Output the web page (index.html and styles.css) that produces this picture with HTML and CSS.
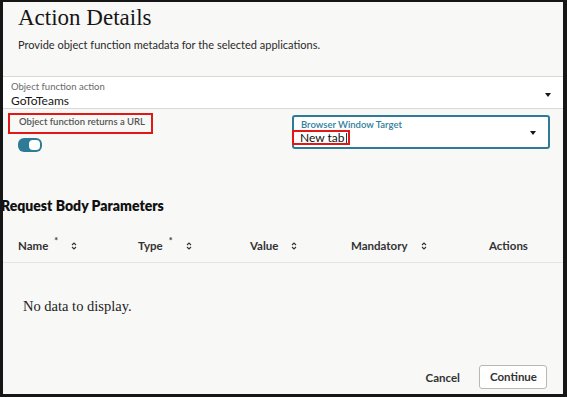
FILE: index.html
```html
<!DOCTYPE html>
<html>
    <head>
        <title>Action Details</title>
        <link rel="stylesheet" href="styles.css">
    </head>
    <body>
        <div class="dialog">
            <div class="head">
                <h1 class="title">Action Details</h1>
                <p class="intro">Provide object function metadata for the selected applications.</p>
            </div>

            <div class="band">
                <div>
                    <div class="field-label">Object function action</div>
                    <div class="field-value">GoToTeams</div>
                </div>
                <span class="caret"></span>
            </div>

            <div class="options">
                <div class="url-opt">
                    <div class="mark-box">Object function returns a URL</div>
                    <div class="toggle"><span class="knob"></span></div>
                </div>
                <div class="target">
                    <div>
                        <div class="target-label">Browser Window Target</div>
                        <div class="target-value"><span class="mark-value">New tab<i class="cursor"></i></span></div>
                    </div>
                    <span class="caret"></span>
                </div>
            </div>

            <h2 class="section">Request Body Parameters</h2>

            <div class="grid-head">
                <div class="col">Name<span class="req">*</span><svg class="sort" viewBox="0 0 6 10"><path d="M1 4 L3 2 L5 4 M1 6 L3 8 L5 6"/></svg></div>
                <div class="col">Type<span class="req">*</span><svg class="sort" viewBox="0 0 6 10"><path d="M1 4 L3 2 L5 4 M1 6 L3 8 L5 6"/></svg></div>
                <div class="col">Value<svg class="sort" viewBox="0 0 6 10"><path d="M1 4 L3 2 L5 4 M1 6 L3 8 L5 6"/></svg></div>
                <div class="col">Mandatory<svg class="sort" viewBox="0 0 6 10"><path d="M1 4 L3 2 L5 4 M1 6 L3 8 L5 6"/></svg></div>
                <div class="col">Actions</div>
            </div>
            <div class="empty">No data to display.</div>

            <div class="footer">
                <span class="cancel">Cancel</span>
                <span class="continue">Continue</span>
            </div>
        </div>
    </body>
</html>
```

FILE: styles.css
```css
html, body {
    margin: 0;
    height: 100%;
}
body {
    font-family: Lato, "Noto Sans", sans-serif;
    color: #1f1f1f;
}
.dialog {
    box-sizing: border-box;
    height: 397px;
    width: 567px;
    border-style: solid;
    border-color: #161616;
    border-width: 2px 4px 3px 3px;
    background: #f8f8f7;
    display: flex;
    flex-direction: column;
    overflow: hidden;
}
.head {
    height: 75px;
    box-sizing: border-box;
    padding: 2px 15px 0;
    border-bottom: 1px solid #d8d8d6;
}
.title {
    margin: 0;
    font-family: "Liberation Serif", serif;
    font-weight: normal;
    font-size: 23px;
    line-height: 28px;
    color: #161616;
}
.intro {
    margin: 6px 0 0;
    font-size: 11px;
    line-height: 14px;
    color: #2a2a2a;
}
.band {
    background: #fff;
    height: 32px;
    box-sizing: border-box;
    padding: 4px 12px 0 8px;
    border-bottom: 1px solid #d8d8d6;
    display: flex;
    justify-content: space-between;
    align-items: center;
}
.band > div {
    align-self: flex-start;
}
.field-label {
    font-size: 9.5px;
    line-height: 12px;
    color: #6a6a6a;
}
.field-value {
    font-size: 12px;
    line-height: 15px;
    color: #161616;
}
.caret {
    width: 0;
    height: 0;
    border-left: 3px solid transparent;
    border-right: 3px solid transparent;
    border-top: 4px solid #161616;
}
.options {
    display: grid;
    grid-template-columns: 284px 1fr;
    padding: 4px 13px 0 5px;
}
.mark-box {
    width: 145px;
    box-sizing: border-box;
    border: 2px solid #e01818;
    padding: 1px 6px 4px 9px;
    font-size: 9.5px;
    line-height: 12px;
    color: #555;
    font-weight: 600;
}
.toggle {
    width: 24px;
    height: 14px;
    box-sizing: border-box;
    margin: 4px 0 0 10px;
    border-radius: 6px;
    background: #2c7c97;
    padding: 2px;
    display: flex;
    justify-content: flex-end;
}
.knob {
    width: 11px;
    height: 10px;
    border-radius: 4px;
    background: #fff;
}
.target {
    margin-top: 2px;
    height: 34px;
    box-sizing: border-box;
    border: 2px solid #2d7b97;
    border-radius: 3px;
    background: #fff;
    padding: 2px 12px 0 7px;
    display: flex;
    justify-content: space-between;
    align-items: center;
}
.target > div {
    align-self: flex-start;
}
.target-label {
    font-size: 9.5px;
    line-height: 11px;
    color: #2f7e9c;
    font-weight: 600;
}
.target-value {
    font-size: 12px;
    line-height: 15px;
    height: 15px;
}
.mark-value {
    display: inline-block;
    line-height: 11px;
    border: 2px solid #e01818;
    margin-left: -9px;
    padding: 0 1px 0 6px;
    color: #111;
}
.cursor {
    display: inline-block;
    width: 1px;
    height: 10px;
    background: #333;
    margin-left: 1px;
    vertical-align: -1px;
}
.section {
    margin: 46px 0 0 -2px;
    font-size: 14px;
    line-height: 16px;
    font-weight: 800;
    color: #111;
}
.grid-head {
    display: grid;
    grid-template-columns: 120px 112px 101px 138px 1fr;
    padding: 25px 0 9px 15px;
    border-bottom: 1px solid #e4e4e2;
    font-size: 11.5px;
    line-height: 14px;
    font-weight: 700;
    color: #333;
}
.col {
    display: flex;
    align-items: center;
}
.req {
    font-size: 9px;
    margin-left: 6px;
    align-self: flex-start;
    line-height: 8px;
    margin-top: -2px;
}
.sort {
    width: 6px;
    height: 10px;
    margin-left: 13px;
    fill: none;
    stroke: #333;
    stroke-width: 1.1;
}
.empty {
    padding: 35px 0 0 20px;
    font-family: "Liberation Serif", serif;
    font-size: 14.5px;
    line-height: 17px;
    color: #222;
}
.footer {
    margin-top: auto;
    display: flex;
    justify-content: flex-end;
    align-items: center;
    gap: 19px;
    padding: 0 16px 5px 0;
    font-size: 11.5px;
    font-weight: 700;
    color: #333;
}
.continue {
    display: inline-block;
    height: 24px;
    box-sizing: border-box;
    line-height: 22px;
    padding: 0 9px 0 10px;
    border: 1px solid #b8b8b6;
    border-radius: 3px;
    background: #fff;
}
```
